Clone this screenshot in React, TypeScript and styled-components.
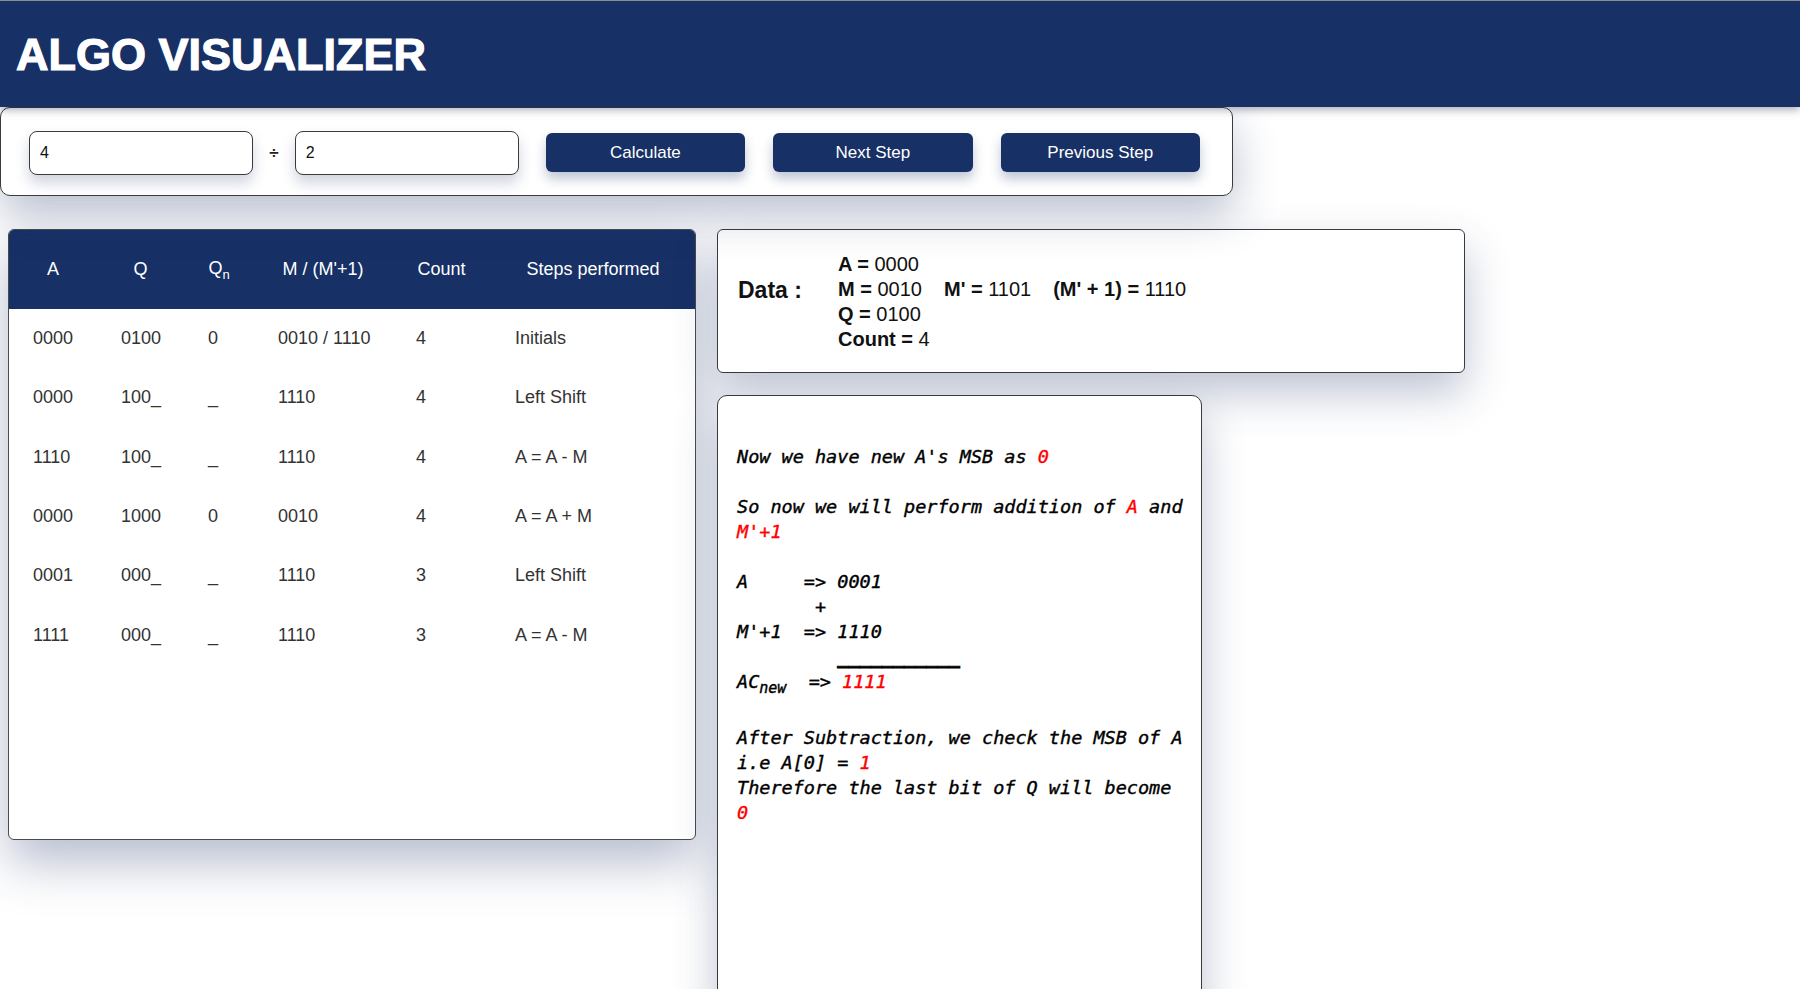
import React, { useState } from "react"
import styled, { createGlobalStyle } from "styled-components"

const NAVY = "#173065"

type Row = { a: string; q: string; qn: string; m: string; count: string; step: string }

const rows: Row[] = [
  { a: "0000", q: "0100", qn: "0", m: "0010 / 1110", count: "4", step: "Initials" },
  { a: "0000", q: "100_", qn: "_", m: "1110", count: "4", step: "Left Shift" },
  { a: "1110", q: "100_", qn: "_", m: "1110", count: "4", step: "A = A - M" },
  { a: "0000", q: "1000", qn: "0", m: "0010", count: "4", step: "A = A + M" },
  { a: "0001", q: "000_", qn: "_", m: "1110", count: "3", step: "Left Shift" },
  { a: "1111", q: "000_", qn: "_", m: "1110", count: "3", step: "A = A - M" }
]

const colWidths = [88, 87, 70, 138, 99, 204]

const App = () => {
  const [dividend, setDividend] = useState("4")
  const [divisor, setDivisor] = useState("2")

  return (
    <>
      <GlobalStyle />
      <Header>
        <Title>ALGO VISUALIZER</Title>
      </Header>

      <Controls>
        <NumInput value={dividend} onChange={(e) => setDividend(e.target.value)} />
        <DivSign>÷</DivSign>
        <NumInput value={divisor} onChange={(e) => setDivisor(e.target.value)} />
        <Btn>Calculate</Btn>
        <Btn>Next Step</Btn>
        <Btn>Previous Step</Btn>
      </Controls>

      <Main>
        <TableCard>
          <Table>
            <colgroup>
              {colWidths.map((w, i) => (
                <col key={i} style={{ width: w }} />
              ))}
            </colgroup>
            <thead>
              <tr>
                <Th>A</Th>
                <Th>Q</Th>
                <Th>
                  Q<Sub>n</Sub>
                </Th>
                <Th>M / (M'+1)</Th>
                <Th>Count</Th>
                <Th>Steps performed</Th>
              </tr>
            </thead>
            <tbody>
              {rows.map((r, i) => (
                <tr key={i}>
                  <Td>{r.a}</Td>
                  <Td>{r.q}</Td>
                  <Td>{r.qn}</Td>
                  <Td>{r.m}</Td>
                  <Td>{r.count}</Td>
                  <Td>{r.step}</Td>
                </tr>
              ))}
            </tbody>
          </Table>
        </TableCard>

        <Side>
          <DataCard>
            <DataLabel>Data :</DataLabel>
            <DataLines>
              <div>
                <b>A =</b> 0000
              </div>
              <div>
                <b>M =</b> 0010
                <Gap>
                  <b>M' =</b> 1101
                </Gap>
                <Gap>
                  <b>(M' + 1) =</b> 1110
                </Gap>
              </div>
              <div>
                <b>Q =</b> 0100
              </div>
              <div>
                <b>Count =</b> 4
              </div>
            </DataLines>
          </DataCard>

          <ExplainCard>
            <Explain>
              {"Now we have new A's MSB as "}
              <Red>0</Red>
              {"\n\nSo now we will perform addition of "}
              <Red>A</Red>
              {" and\n"}
              <Red>M'+1</Red>
              {"\n\nA     => 0001\n       +\nM'+1  => 1110\n         "}
              <Rule>___________</Rule>
              {"\n"}
              <TallLine>
                AC<SubNew>new</SubNew>
                {"  => "}
                <Red>1111</Red>
              </TallLine>
              {"\n\nAfter Subtraction, we check the MSB of A\ni.e A[0] = "}
              <Red>1</Red>
              {"\nTherefore the last bit of Q will become\n"}
              <Red>0</Red>
            </Explain>
          </ExplainCard>
        </Side>
      </Main>
    </>
  )
}

const GlobalStyle = createGlobalStyle`
  body {
    margin: 0;
    background: #fff;
    font-family: "Liberation Sans", Arial, sans-serif;
    overflow: hidden;
  }
`

const Header = styled.header`
  position: relative;
  z-index: 2;
  height: 107px;
  box-sizing: border-box;
  border-top: 1px solid #8c8c8c;
  background: ${NAVY};
  display: flex;
  align-items: center;
  padding: 2px 0 0 16px;
  box-shadow: 0 3px 8px rgba(20, 30, 60, 0.35);
`

const Title = styled.h1`
  margin: 0;
  color: #fff;
  font-size: 45px;
  font-weight: 700;
  -webkit-text-stroke: 1.2px #fff;
`

const Controls = styled.div`
  position: relative;
  z-index: 1;
  width: 1233px;
  height: 89px;
  box-sizing: border-box;
  display: flex;
  align-items: center;
  padding: 2px 32px 0 28px;
  border: 1px solid #3b3b3b;
  border-radius: 10px;
  background: #fff;
  box-shadow: 0 18px 44px rgba(40, 60, 110, 0.32);
`

const NumInput = styled.input`
  width: 224px;
  height: 44px;
  box-sizing: border-box;
  padding: 0 10px;
  border: 1px solid #3a3a3a;
  border-radius: 8px;
  font-family: "Liberation Sans", Arial, sans-serif;
  font-size: 16px;
  color: #111;
  background: #fff;
  box-shadow: 0 8px 14px rgba(40, 60, 110, 0.22);
  outline: none;
`

const DivSign = styled.span`
  width: 42px;
  text-align: center;
  font-size: 17px;
  font-weight: 700;
  color: #222;
`

const Btn = styled.button`
  width: 201px;
  height: 39px;
  margin-left: 27px;
  border: none;
  border-radius: 6px;
  background: ${NAVY};
  color: #fff;
  font-family: "Liberation Sans", Arial, sans-serif;
  font-size: 17px;
  cursor: pointer;
  box-shadow: 0 7px 12px rgba(30, 50, 100, 0.28);

  & + & {
    margin-left: 28px;
  }
`

const Main = styled.div`
  display: flex;
  align-items: flex-start;
  gap: 21px;
  padding-left: 8px;
  margin-top: 33px;
`

const TableCard = styled.div`
  width: 688px;
  height: 611px;
  box-sizing: border-box;
  border: 1px solid #4a4a4a;
  border-radius: 6px;
  overflow: hidden;
  background: #fff;
  box-shadow: 0 22px 50px rgba(40, 60, 110, 0.34);
`

const Table = styled.table`
  width: 686px;
  table-layout: fixed;
  border-collapse: collapse;
`

const Th = styled.th`
  height: 79px;
  padding: 0;
  background: ${NAVY};
  color: #fff;
  font-size: 18px;
  font-weight: 400;
  text-align: center;
  white-space: nowrap;
`

const Sub = styled.sub`
  font-size: 13px;
`

const Td = styled.td`
  height: 59.3px;
  padding: 0 0 0 24px;
  font-size: 18px;
  color: #333;
  white-space: nowrap;
`

const Side = styled.div`
  display: flex;
  flex-direction: column;
  gap: 22px;
`

const DataCard = styled.div`
  width: 748px;
  height: 144px;
  box-sizing: border-box;
  display: flex;
  padding: 22px 20px 20px;
  border: 1px solid #3a3a3a;
  border-radius: 6px;
  background: #fff;
  box-shadow: 0 20px 44px rgba(40, 60, 110, 0.3);
`

const DataLabel = styled.div`
  width: 100px;
  margin-top: 26px;
  font-size: 23px;
  font-weight: 700;
  line-height: 25px;
  color: #111;
`

const DataLines = styled.div`
  font-size: 20px;
  line-height: 25px;
  color: #111;
  white-space: nowrap;

  b {
    font-weight: 700;
  }
`

const Gap = styled.span`
  margin-left: 22px;
`

const ExplainCard = styled.div`
  width: 485px;
  height: 640px;
  box-sizing: border-box;
  padding: 48px 14px 0 19px;
  border: 1px solid #3a3a3a;
  border-radius: 10px;
  background: #fff;
  box-shadow: 0 20px 44px rgba(40, 60, 110, 0.3);
`

const Explain = styled.pre`
  margin: 0;
  font-family: "DejaVu Sans Mono", "Liberation Mono", monospace;
  font-style: italic;
  font-size: 18.5px;
  line-height: 25px;
  color: #000;
  white-space: pre-wrap;
  -webkit-text-stroke: 0.4px currentColor;
`

const Rule = styled.span`
  font-weight: 700;
  -webkit-text-stroke: 0.8px currentColor;
`

const TallLine = styled.span`
  display: inline-block;
  height: 31px;
  vertical-align: top;
`

const Red = styled.span`
  color: #f00;
`

const SubNew = styled.sub`
  font-size: 15px;
  line-height: 0;
`

export default App
